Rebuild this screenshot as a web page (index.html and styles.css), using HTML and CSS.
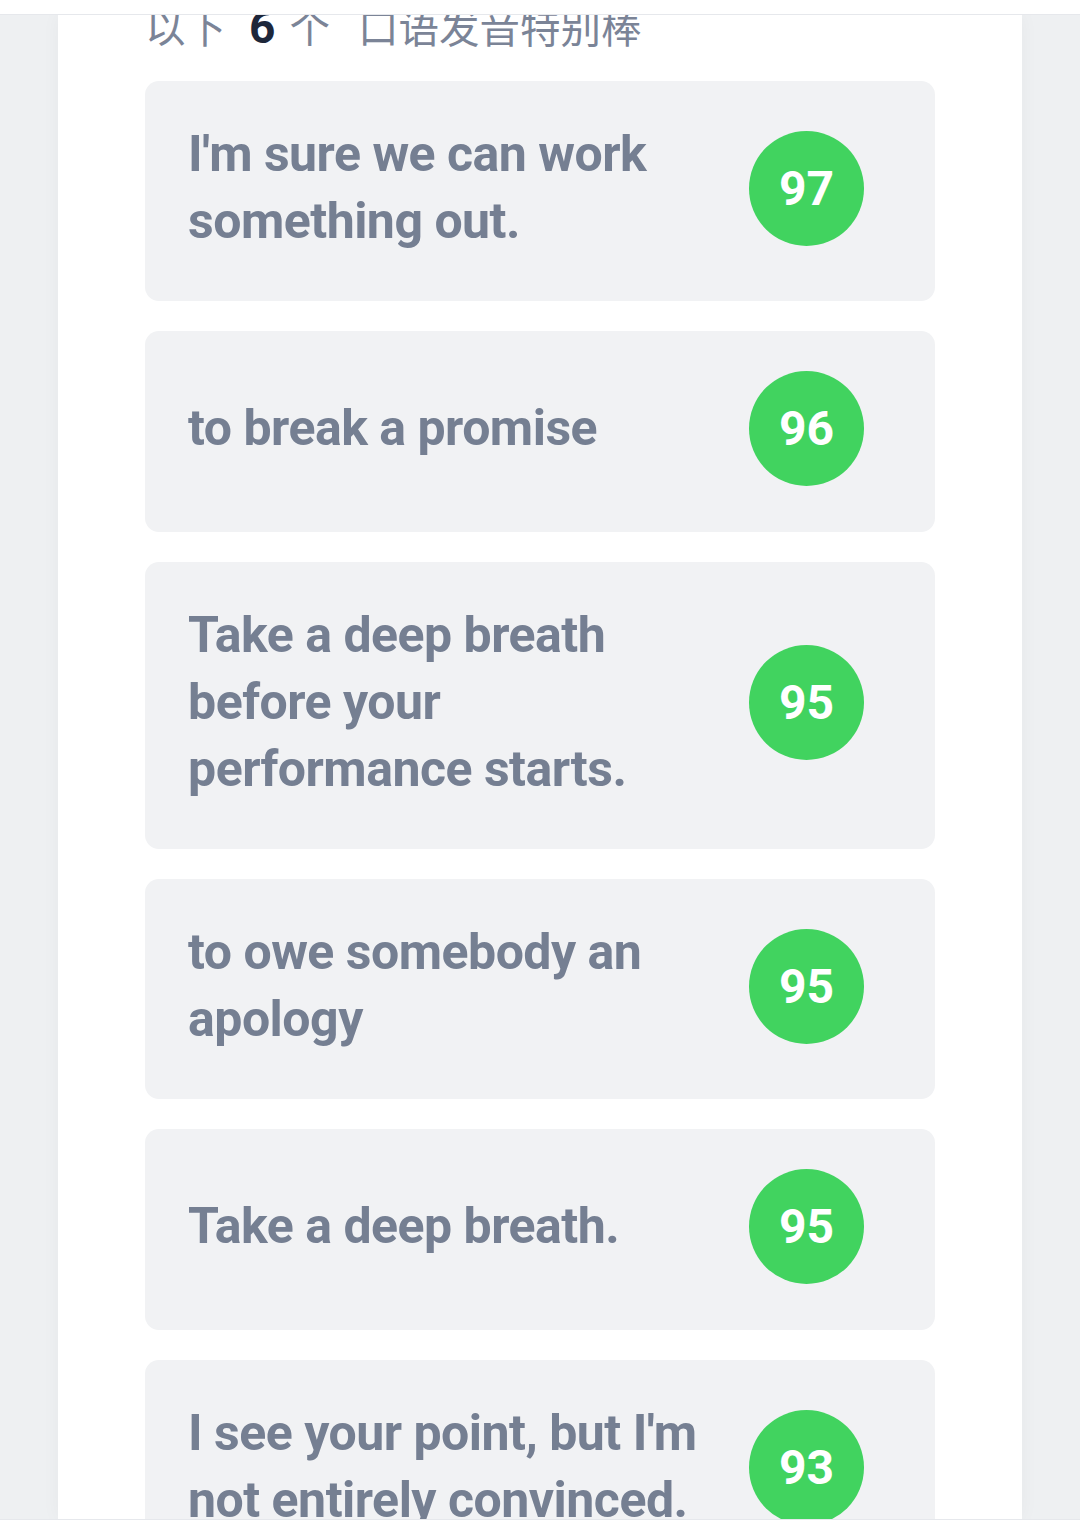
FILE: index.html
```html
<!DOCTYPE html>
<html lang="zh">
<head>
<meta charset="utf-8">
<title>口语发音</title>
<link rel="stylesheet" href="styles.css">
</head>
<body>
<div class="topbar"></div>
<div class="viewport">
  <div class="panel">
    <h2 class="heading">以下<span class="num">6</span>个<span class="rest">口语发音特别棒</span></h2>
    <div class="list">
      <div class="card"><p class="phrase">I'm sure we can work something out.</p><div class="score">97</div></div>
      <div class="card"><p class="phrase">to break a promise</p><div class="score">96</div></div>
      <div class="card"><p class="phrase">Take a deep breath before your performance starts.</p><div class="score">95</div></div>
      <div class="card"><p class="phrase">to owe somebody an apology</p><div class="score">95</div></div>
      <div class="card"><p class="phrase">Take a deep breath.</p><div class="score">95</div></div>
      <div class="card"><p class="phrase">I see your point, but I'm not entirely convinced.</p><div class="score">93</div></div>
    </div>
  </div>
</div>
<div class="bottombar"></div>
</body>
</html>
```

FILE: styles.css
```css
html, body {
  margin: 0;
  padding: 0;
}
body {
  height: 1527px;
  display: flex;
  flex-direction: column;
  background: #ffffff;
  font-family: Roboto, "Noto Sans CJK SC", sans-serif;
  overflow: hidden;
}
.topbar {
  height: 14px;
  flex: none;
  background: #ffffff;
  border-bottom: 1px solid #e6e8ec;
}
.bottombar {
  height: 7px;
  flex: none;
  background: #ffffff;
  border-top: 1px solid #e6e8ec;
}
.viewport {
  flex: 1;
  min-height: 0;
  overflow: hidden;
  background: #eef0f2;
  display: flex;
  justify-content: center;
}
.panel {
  width: 964px;
  background: #ffffff;
  box-shadow: 0 0 18px rgba(30, 40, 60, 0.04);
  padding: 0 87px;
  box-sizing: border-box;
}
.heading {
  margin: -19px 0 24px 0;
  font-family: "Noto Sans CJK SC", sans-serif;
  font-size: 40.5px;
  line-height: 60px;
  font-weight: 400;
  color: #7b8497;
  white-space: nowrap;
}
.heading .num {
  font-family: Roboto, sans-serif;
  font-weight: 700;
  font-size: 46px;
  color: #1e273a;
  margin: 0 14px 0 23px;
}
.heading .rest {
  margin-left: 28px;
}
.list {
  display: flex;
  flex-direction: column;
  gap: 30px;
}
.card {
  background: #f1f2f4;
  border-radius: 14px;
  padding: 40px 71px 40px 43px;
  display: flex;
  align-items: center;
  gap: 40px;
}
.phrase {
  flex: 1;
  margin: 0;
  padding-bottom: 6px;
  font-family: Roboto, sans-serif;
  font-weight: 700;
  font-size: 50px;
  line-height: 67px;
  color: #757f92;
  letter-spacing: -0.5px;
}
.score {
  flex: none;
  width: 115px;
  height: 115px;
  margin: 0 0 6px 0;
  border-radius: 50%;
  background: #41d35f;
  color: #ffffff;
  font-family: Roboto, sans-serif;
  font-weight: 700;
  font-size: 48px;
  display: flex;
  align-items: center;
  justify-content: center;
}
```
